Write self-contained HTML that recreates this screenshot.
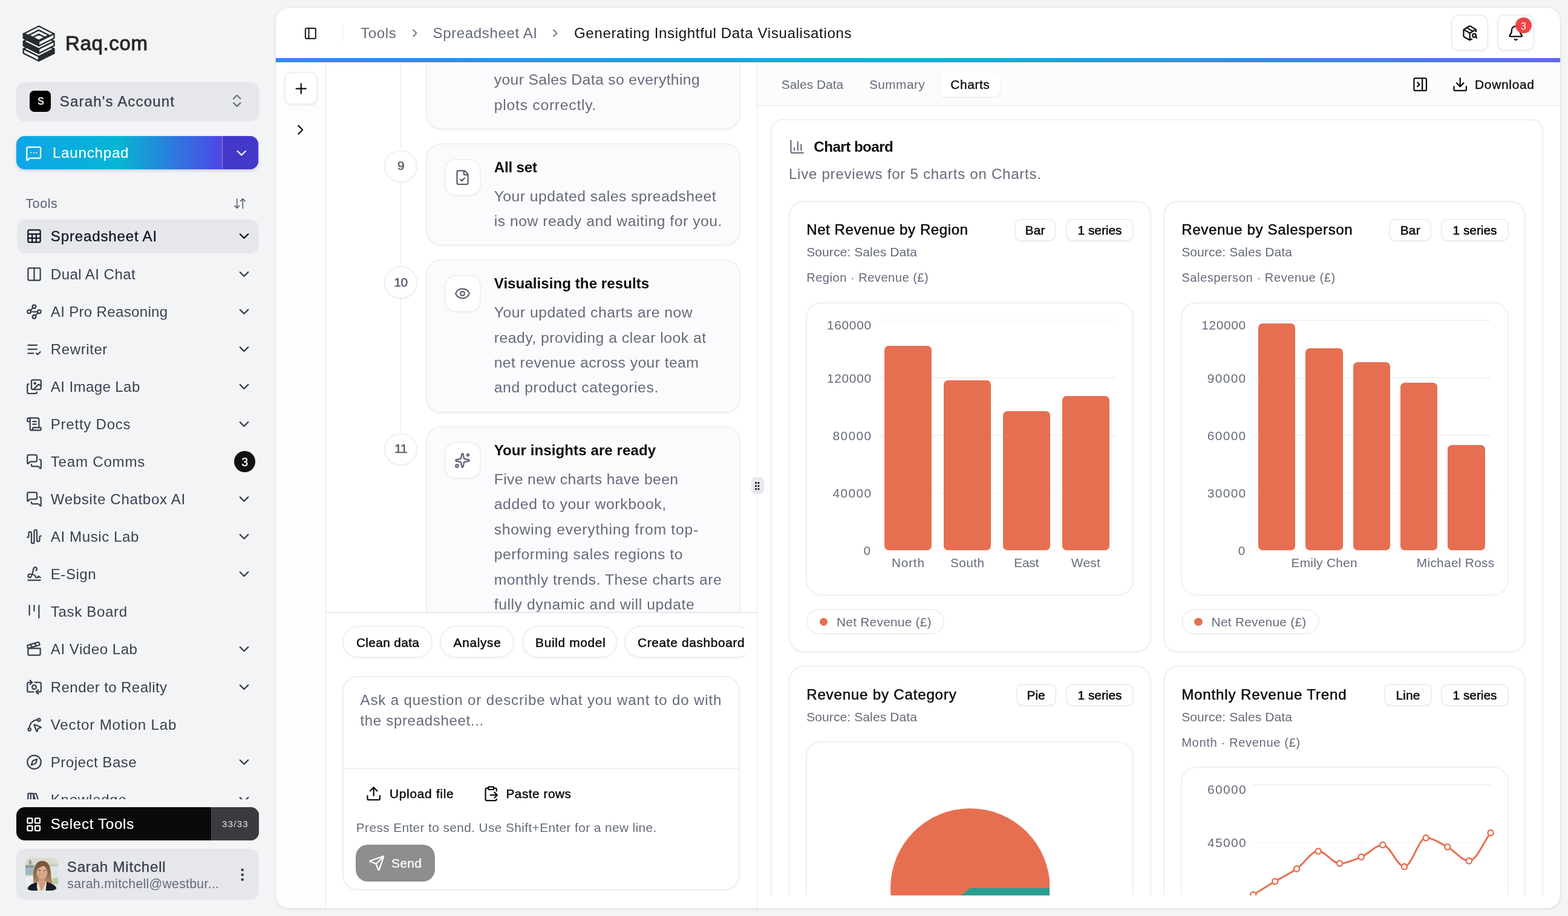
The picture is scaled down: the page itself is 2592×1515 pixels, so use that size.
<!DOCTYPE html>
<html lang="en"><head><meta charset="utf-8"><title>Raq.com – Spreadsheet AI</title>
<style>
*{box-sizing:border-box;margin:0;padding:0}
html,body{width:2592px;height:1515px;overflow:hidden;background:#f3f4f6}
body{position:relative;will-change:transform;font-family:"Liberation Sans",sans-serif;-webkit-font-smoothing:antialiased}
div,svg{position:absolute}
.t{white-space:nowrap}
</style></head><body>
<svg style="left:30px;top:35px" width="70" height="75" viewBox="0 0 70 75"><g transform="scale(0.05091)" stroke="#272c2e" stroke-width="45" stroke-linejoin="round"><polygon points="670,652 1168,901 670,1150 172,901" fill="#f3f4f6"/><polygon points="172,901 670,1150 670,1292 172,1044" fill="#f3f4f6"/><polygon points="1168,901 670,1150 670,1292 1168,1044" fill="#272c2e"/><polygon points="670,407 1168,656 670,905 172,656" fill="#f3f4f6"/><polygon points="172,656 670,905 670,1048 172,798" fill="#272c2e"/><polygon points="1168,656 670,905 670,1048 1168,798" fill="#f3f4f6"/><polygon points="670,162 1168,411 670,660 172,411" fill="#f3f4f6"/><polygon points="172,411 670,660 670,802 172,554" fill="#272c2e"/><polygon points="1168,411 670,660 670,802 1168,554" fill="#f3f4f6"/><polygon points="172,411 340,457 470,525 670,625 670,660" fill="#272c2e"/><polygon points="670,292 1000,457 670,622 340,457" fill="none"/><polygon points="670,425 870,525 670,625 470,525" fill="#f3f4f6"/></g></svg>
<div class="t" style="left:108.00px;top:53.00px;font-size:32.96px;line-height:37px;height:37px;color:#27272a;-webkit-text-stroke:1.0px #27272a;letter-spacing:0.688px;">Raq.com</div>
<div style="left:27.00px;top:136.20px;width:401.00px;height:64.20px;background:#e5e7eb;border-radius:14px;box-shadow:0 1px 2px rgba(20,20,50,.05);"></div>
<div style="left:49.40px;top:149.90px;width:34.60px;height:34.70px;background:#000;border-radius:7.5px;"></div>
<div class="t" style="left:62.30px;top:159.00px;font-size:15.86px;line-height:17px;height:17px;color:#fff;-webkit-text-stroke:0.4px #fff;">S</div>
<div class="t" style="left:98.80px;top:154.00px;font-size:24.10px;line-height:27px;height:27px;color:#3a3f4e;-webkit-text-stroke:0.35px #3a3f4e;letter-spacing:1.130px;">Sarah's Account</div>
<svg style="left:378.30px;top:153.10px;" width="27.40" height="27.40" viewBox="0 0 24 24" fill="none" color="#6b7280" stroke="#6b7280" stroke-width="2" stroke-linecap="round" stroke-linejoin="round"><path d="m7 15 5 5 5-5"/><path d="m7 9 5-5 5 5"/></svg>
<div style="left:27.00px;top:225.00px;width:400.20px;height:55.30px;border-radius:14px;background:linear-gradient(90deg,#0ea5e9 0%,#06b6d4 42%,#4f46e5 85%,#4f46e5 100%);box-shadow:0 2px 5px rgba(30,40,120,.22);"></div>
<div style="left:366.60px;top:225.00px;width:60.60px;height:55.30px;border-radius:0 14px 14px 0;background:#4338ca;border-left:1.5px solid rgba(255,255,255,.45);"></div>
<svg style="left:42.10px;top:239.90px;" width="27.40" height="27.40" viewBox="0 0 24 24" fill="none" color="#fff" stroke="#fff" stroke-width="2" stroke-linecap="round" stroke-linejoin="round"><path d="M22 17a2 2 0 0 1-2 2H6.828a2 2 0 0 0-1.414.586l-2.202 2.202A.71.71 0 0 1 2 21.286V5a2 2 0 0 1 2-2h16a2 2 0 0 1 2 2z"/><path d="M12 11h.01"/><path d="M16 11h.01"/><path d="M8 11h.01"/></svg>
<div class="t" style="left:86.90px;top:239.00px;font-size:24.10px;line-height:27px;height:27px;color:#fff;-webkit-text-stroke:0.15px #fff;letter-spacing:0.794px;">Launchpad</div>
<svg style="left:385.65px;top:240.35px;" width="26.50" height="26.50" viewBox="0 0 24 24" fill="none" color="#fff" stroke="#fff" stroke-width="2" stroke-linecap="round" stroke-linejoin="round"><path d="m6 9 6 6 6-6"/></svg>
<div class="t" style="left:42.60px;top:325.00px;font-size:21.22px;line-height:23px;height:23px;color:#656a7b;-webkit-text-stroke:0.2px #656a7b;letter-spacing:0.613px;">Tools</div>
<svg style="left:385.30px;top:325.10px;" width="23.00" height="23.00" viewBox="0 0 24 24" fill="none" color="#5f6472" stroke="#5f6472" stroke-width="1.8" stroke-linecap="round" stroke-linejoin="round"><path d="m3 16 4 4 4-4"/><path d="M7 20V4"/><path d="m21 8-4-4-4 4"/><path d="M17 4v16"/></svg>
<div style="left:0.00px;top:355.00px;width:456.00px;height:966.70px;overflow:hidden;"><div style="left:27.80px;top:8.25px;width:400.00px;height:55.30px;background:#e5e7eb;border-radius:14px;"></div>
<svg style="left:43.00px;top:22.45px;" width="27.00" height="27.00" viewBox="0 0 24 24" fill="none" color="#111827" stroke="#111827" stroke-width="2" stroke-linecap="round" stroke-linejoin="round"><rect width="18" height="18" x="3" y="3" rx="2" ry="2"/><line x1="3" x2="21" y1="9" y2="9"/><line x1="3" x2="21" y1="15" y2="15"/><line x1="9" x2="9" y1="9" y2="21"/><line x1="15" x2="15" y1="9" y2="21"/></svg>
<div class="t" style="left:83.80px;top:22.00px;font-size:24.10px;line-height:27px;height:27px;color:#111827;-webkit-text-stroke:0.35px #111827;letter-spacing:0.818px;">Spreadsheet AI</div>
<svg style="left:390.00px;top:22.45px;" width="27.00" height="27.00" viewBox="0 0 24 24" fill="none" color="#111827" stroke="#111827" stroke-width="2" stroke-linecap="round" stroke-linejoin="round"><path d="m6 9 6 6 6-6"/></svg>
<svg style="left:43.00px;top:84.54px;" width="27.00" height="27.00" viewBox="0 0 24 24" fill="none" color="#3a3f4e" stroke="#3a3f4e" stroke-width="2" stroke-linecap="round" stroke-linejoin="round"><rect width="18" height="18" x="3" y="3" rx="2"/><path d="M12 3v18"/></svg>
<div class="t" style="left:83.80px;top:85.00px;font-size:24.10px;line-height:27px;height:27px;color:#3a3f4e;letter-spacing:0.429px;">Dual AI Chat</div>
<svg style="left:390.00px;top:84.54px;" width="27.00" height="27.00" viewBox="0 0 24 24" fill="none" color="#3a3f4e" stroke="#3a3f4e" stroke-width="2" stroke-linecap="round" stroke-linejoin="round"><path d="m6 9 6 6 6-6"/></svg>
<svg style="left:43.00px;top:146.63px;" width="27.00" height="27.00" viewBox="0 0 24 24" fill="none" color="#3a3f4e" stroke="#3a3f4e" stroke-width="2" stroke-linecap="round" stroke-linejoin="round"><circle cx="12" cy="4.5" r="2.5"/><path d="m10.2 6.3-3.9 3.9"/><circle cx="4.5" cy="12" r="2.5"/><path d="M7 12h10"/><circle cx="19.5" cy="12" r="2.5"/><path d="m13.8 17.7 3.9-3.9"/><circle cx="12" cy="19.5" r="2.5"/></svg>
<div class="t" style="left:83.80px;top:147.00px;font-size:24.10px;line-height:27px;height:27px;color:#3a3f4e;letter-spacing:0.303px;">AI Pro Reasoning</div>
<svg style="left:390.00px;top:146.63px;" width="27.00" height="27.00" viewBox="0 0 24 24" fill="none" color="#3a3f4e" stroke="#3a3f4e" stroke-width="2" stroke-linecap="round" stroke-linejoin="round"><path d="m6 9 6 6 6-6"/></svg>
<svg style="left:43.00px;top:208.72px;" width="27.00" height="27.00" viewBox="0 0 24 24" fill="none" color="#3a3f4e" stroke="#3a3f4e" stroke-width="2" stroke-linecap="round" stroke-linejoin="round"><path d="M11 18H3"/><path d="m15 18 2 2 4-4"/><path d="M16 12H3"/><path d="M16 6H3"/></svg>
<div class="t" style="left:83.80px;top:209.00px;font-size:24.10px;line-height:27px;height:27px;color:#3a3f4e;letter-spacing:0.557px;">Rewriter</div>
<svg style="left:390.00px;top:208.72px;" width="27.00" height="27.00" viewBox="0 0 24 24" fill="none" color="#3a3f4e" stroke="#3a3f4e" stroke-width="2" stroke-linecap="round" stroke-linejoin="round"><path d="m6 9 6 6 6-6"/></svg>
<svg style="left:43.00px;top:270.81px;" width="27.00" height="27.00" viewBox="0 0 24 24" fill="none" color="#3a3f4e" stroke="#3a3f4e" stroke-width="2" stroke-linecap="round" stroke-linejoin="round"><path d="m22 11-1.296-1.296a2.4 2.4 0 0 0-3.408 0L11 16"/><path d="M4 8a2 2 0 0 0-2 2v10a2 2 0 0 0 2 2h10a2 2 0 0 0 2-2"/><circle cx="13" cy="7" r="1" fill="currentColor"/><rect x="8" y="2" width="14" height="14" rx="2"/></svg>
<div class="t" style="left:83.80px;top:271.00px;font-size:24.10px;line-height:27px;height:27px;color:#3a3f4e;letter-spacing:0.379px;">AI Image Lab</div>
<svg style="left:390.00px;top:270.81px;" width="27.00" height="27.00" viewBox="0 0 24 24" fill="none" color="#3a3f4e" stroke="#3a3f4e" stroke-width="2" stroke-linecap="round" stroke-linejoin="round"><path d="m6 9 6 6 6-6"/></svg>
<svg style="left:43.00px;top:332.90px;" width="27.00" height="27.00" viewBox="0 0 24 24" fill="none" color="#3a3f4e" stroke="#3a3f4e" stroke-width="2" stroke-linecap="round" stroke-linejoin="round"><path d="M15 12h-5"/><path d="M15 8h-5"/><path d="M19 17V5a2 2 0 0 0-2-2H4"/><path d="M8 21h12a2 2 0 0 0 2-2v-1a1 1 0 0 0-1-1H11a1 1 0 0 0-1 1v1a2 2 0 1 1-4 0V5a2 2 0 1 0-4 0v2a1 1 0 0 0 1 1h3"/></svg>
<div class="t" style="left:83.80px;top:333.00px;font-size:24.10px;line-height:27px;height:27px;color:#3a3f4e;letter-spacing:0.727px;">Pretty Docs</div>
<svg style="left:390.00px;top:332.90px;" width="27.00" height="27.00" viewBox="0 0 24 24" fill="none" color="#3a3f4e" stroke="#3a3f4e" stroke-width="2" stroke-linecap="round" stroke-linejoin="round"><path d="m6 9 6 6 6-6"/></svg>
<svg style="left:43.00px;top:394.99px;" width="27.00" height="27.00" viewBox="0 0 24 24" fill="none" color="#3a3f4e" stroke="#3a3f4e" stroke-width="2" stroke-linecap="round" stroke-linejoin="round"><path d="M16 10a2 2 0 0 1-2 2H6.828a2 2 0 0 0-1.414.586l-2.202 2.202A.71.71 0 0 1 2 14.286V4a2 2 0 0 1 2-2h10a2 2 0 0 1 2 2z"/><path d="M20 9a2 2 0 0 1 2 2v10.286a.71.71 0 0 1-1.212.502l-2.202-2.202A2 2 0 0 0 17.172 19H10a2 2 0 0 1-2-2v-1"/></svg>
<div class="t" style="left:83.80px;top:395.00px;font-size:24.10px;line-height:27px;height:27px;color:#3a3f4e;letter-spacing:0.766px;">Team Comms</div>
<div style="left:387.40px;top:391.09px;width:34.80px;height:34.80px;background:#111113;border-radius:50%;"></div>
<div class="t" style="left:399.30px;top:398.00px;font-size:19.57px;line-height:22px;height:22px;color:#fff;-webkit-text-stroke:0.25px #fff;">3</div>
<svg style="left:43.00px;top:457.08px;" width="27.00" height="27.00" viewBox="0 0 24 24" fill="none" color="#3a3f4e" stroke="#3a3f4e" stroke-width="2" stroke-linecap="round" stroke-linejoin="round"><path d="M16 10a2 2 0 0 1-2 2H6.828a2 2 0 0 0-1.414.586l-2.202 2.202A.71.71 0 0 1 2 14.286V4a2 2 0 0 1 2-2h10a2 2 0 0 1 2 2z"/><path d="M20 9a2 2 0 0 1 2 2v10.286a.71.71 0 0 1-1.212.502l-2.202-2.202A2 2 0 0 0 17.172 19H10a2 2 0 0 1-2-2v-1"/></svg>
<div class="t" style="left:83.80px;top:457.00px;font-size:24.10px;line-height:27px;height:27px;color:#3a3f4e;letter-spacing:0.655px;">Website Chatbox AI</div>
<svg style="left:390.00px;top:457.08px;" width="27.00" height="27.00" viewBox="0 0 24 24" fill="none" color="#3a3f4e" stroke="#3a3f4e" stroke-width="2" stroke-linecap="round" stroke-linejoin="round"><path d="m6 9 6 6 6-6"/></svg>
<svg style="left:43.00px;top:519.17px;" width="27.00" height="27.00" viewBox="0 0 24 24" fill="none" color="#3a3f4e" stroke="#3a3f4e" stroke-width="2" stroke-linecap="round" stroke-linejoin="round"><path d="M2 13a2 2 0 0 0 2-2V7a2 2 0 0 1 4 0v13a2 2 0 0 0 4 0V4a2 2 0 0 1 4 0v13a2 2 0 0 0 4 0v-4a2 2 0 0 1 2-2"/></svg>
<div class="t" style="left:83.80px;top:519.00px;font-size:24.10px;line-height:27px;height:27px;color:#3a3f4e;letter-spacing:0.584px;">AI Music Lab</div>
<svg style="left:390.00px;top:519.17px;" width="27.00" height="27.00" viewBox="0 0 24 24" fill="none" color="#3a3f4e" stroke="#3a3f4e" stroke-width="2" stroke-linecap="round" stroke-linejoin="round"><path d="m6 9 6 6 6-6"/></svg>
<svg style="left:43.00px;top:581.26px;" width="27.00" height="27.00" viewBox="0 0 24 24" fill="none" color="#3a3f4e" stroke="#3a3f4e" stroke-width="2" stroke-linecap="round" stroke-linejoin="round"><path d="m21 17-2.156-1.868A.5.5 0 0 0 18 15.5v.5a1 1 0 0 1-1 1h-2a1 1 0 0 1-1-1c0-2.545-3.991-3.97-8.5-4a1 1 0 0 0 0 5c4.153 0 4.745-11.295 5.708-13.5a2.5 2.5 0 1 1 3.31 3.284"/><path d="M3 21h18"/></svg>
<div class="t" style="left:83.80px;top:581.00px;font-size:24.10px;line-height:27px;height:27px;color:#3a3f4e;letter-spacing:0.494px;">E-Sign</div>
<svg style="left:390.00px;top:581.26px;" width="27.00" height="27.00" viewBox="0 0 24 24" fill="none" color="#3a3f4e" stroke="#3a3f4e" stroke-width="2" stroke-linecap="round" stroke-linejoin="round"><path d="m6 9 6 6 6-6"/></svg>
<svg style="left:43.00px;top:643.35px;" width="27.00" height="27.00" viewBox="0 0 24 24" fill="none" color="#3a3f4e" stroke="#3a3f4e" stroke-width="2" stroke-linecap="round" stroke-linejoin="round"><path d="M5 3v14"/><path d="M12 3v8"/><path d="M19 3v18"/></svg>
<div class="t" style="left:83.80px;top:643.00px;font-size:24.10px;line-height:27px;height:27px;color:#3a3f4e;letter-spacing:0.652px;">Task Board</div>
<svg style="left:43.00px;top:705.44px;" width="27.00" height="27.00" viewBox="0 0 24 24" fill="none" color="#3a3f4e" stroke="#3a3f4e" stroke-width="2" stroke-linecap="round" stroke-linejoin="round"><path d="M20.2 6 3 11l-.9-2.4c-.3-1.1.3-2.2 1.3-2.5l13.5-4c1.1-.3 2.2.3 2.5 1.3Z"/><path d="m6.2 5.3 3.1 3.9"/><path d="m12.4 3.4 3.1 4"/><path d="M3 11h18v8a2 2 0 0 1-2 2H5a2 2 0 0 1-2-2Z"/></svg>
<div class="t" style="left:83.80px;top:705.00px;font-size:24.10px;line-height:27px;height:27px;color:#3a3f4e;letter-spacing:0.514px;">AI Video Lab</div>
<svg style="left:390.00px;top:705.44px;" width="27.00" height="27.00" viewBox="0 0 24 24" fill="none" color="#3a3f4e" stroke="#3a3f4e" stroke-width="2" stroke-linecap="round" stroke-linejoin="round"><path d="m6 9 6 6 6-6"/></svg>
<svg style="left:43.00px;top:767.53px;" width="27.00" height="27.00" viewBox="0 0 24 24" fill="none" color="#3a3f4e" stroke="#3a3f4e" stroke-width="2" stroke-linecap="round" stroke-linejoin="round"><path d="M11 19H4a2 2 0 0 1-2-2V7a2 2 0 0 1 2-2h5"/><path d="M13 5h7a2 2 0 0 1 2 2v10a2 2 0 0 1-2 2h-5"/><circle cx="12" cy="12" r="3"/><path d="m18 22-3-3 3-3"/><path d="m6 2 3 3-3 3"/></svg>
<div class="t" style="left:83.80px;top:768.00px;font-size:24.10px;line-height:27px;height:27px;color:#3a3f4e;letter-spacing:0.378px;">Render to Reality</div>
<svg style="left:390.00px;top:767.53px;" width="27.00" height="27.00" viewBox="0 0 24 24" fill="none" color="#3a3f4e" stroke="#3a3f4e" stroke-width="2" stroke-linecap="round" stroke-linejoin="round"><path d="m6 9 6 6 6-6"/></svg>
<svg style="left:43.00px;top:829.62px;" width="27.00" height="27.00" viewBox="0 0 24 24" fill="none" color="#3a3f4e" stroke="#3a3f4e" stroke-width="2" stroke-linecap="round" stroke-linejoin="round"><path d="M12.034 12.681a.498.498 0 0 1 .647-.647l9 3.5a.5.5 0 0 1-.033.943l-3.444 1.068a1 1 0 0 0-.66.66l-1.067 3.443a.5.5 0 0 1-.943.033z"/><path d="M5 17A12 12 0 0 1 17 5"/><circle cx="19" cy="5" r="2"/><circle cx="5" cy="19" r="2"/></svg>
<div class="t" style="left:83.80px;top:830.00px;font-size:24.10px;line-height:27px;height:27px;color:#3a3f4e;letter-spacing:0.836px;">Vector Motion Lab</div>
<svg style="left:43.00px;top:891.71px;" width="27.00" height="27.00" viewBox="0 0 24 24" fill="none" color="#3a3f4e" stroke="#3a3f4e" stroke-width="2" stroke-linecap="round" stroke-linejoin="round"><path d="m16.24 7.76-1.804 5.411a2 2 0 0 1-1.265 1.265L7.76 16.24l1.804-5.411a2 2 0 0 1 1.265-1.265z"/><circle cx="12" cy="12" r="10"/></svg>
<div class="t" style="left:83.80px;top:892.00px;font-size:24.10px;line-height:27px;height:27px;color:#3a3f4e;letter-spacing:0.481px;">Project Base</div>
<svg style="left:390.00px;top:891.71px;" width="27.00" height="27.00" viewBox="0 0 24 24" fill="none" color="#3a3f4e" stroke="#3a3f4e" stroke-width="2" stroke-linecap="round" stroke-linejoin="round"><path d="m6 9 6 6 6-6"/></svg>
<svg style="left:43.00px;top:953.80px;" width="27.00" height="27.00" viewBox="0 0 24 24" fill="none" color="#3a3f4e" stroke="#3a3f4e" stroke-width="2" stroke-linecap="round" stroke-linejoin="round"><rect width="8" height="18" x="3" y="3" rx="1"/><path d="M7 3v18"/><path d="M20.4 18.9c.2.5-.1 1.1-.6 1.3l-1.9.7c-.5.2-1.1-.1-1.3-.6L11.1 5.1c-.2-.5.1-1.1.6-1.3l1.9-.7c.5-.2 1.1.1 1.3.6Z"/></svg>
<div class="t" style="left:83.80px;top:954.00px;font-size:24.10px;line-height:27px;height:27px;color:#3a3f4e;letter-spacing:0.721px;">Knowledge</div>
<svg style="left:390.00px;top:953.80px;" width="27.00" height="27.00" viewBox="0 0 24 24" fill="none" color="#3a3f4e" stroke="#3a3f4e" stroke-width="2" stroke-linecap="round" stroke-linejoin="round"><path d="m6 9 6 6 6-6"/></svg></div>
<div style="left:27.00px;top:1335.00px;width:400.80px;height:55.30px;background:#09090b;border-radius:14px;"></div>
<div style="left:349.20px;top:1335.00px;width:78.60px;height:55.30px;background:#3a3a3f;border-radius:0 14px 14px 0;border-left:1px solid #4a4a50;"></div>
<svg style="left:42.00px;top:1350.20px;" width="27.40" height="27.40" viewBox="0 0 24 24" fill="none" color="#fff" stroke="#fff" stroke-width="2" stroke-linecap="round" stroke-linejoin="round"><rect width="7" height="7" x="3" y="3" rx="1"/><rect width="7" height="7" x="14" y="3" rx="1"/><rect width="7" height="7" x="14" y="14" rx="1"/><rect width="7" height="7" x="3" y="14" rx="1"/></svg>
<div class="t" style="left:83.80px;top:1349.00px;font-size:24.10px;line-height:27px;height:27px;color:#fff;-webkit-text-stroke:0.2px #fff;letter-spacing:0.721px;">Select Tools</div>
<div class="t" style="left:367.00px;top:1354.00px;font-size:15.04px;line-height:17px;height:17px;color:#e4e4e7;letter-spacing:1.269px;">33/33</div>
<div style="left:27.00px;top:1404.20px;width:400.80px;height:83.60px;background:#e5e7eb;border-radius:14px;"></div>
<svg style="left:42px;top:1418.8px;border-radius:10.5px" width="54.2" height="54.2" viewBox="0 0 54 54">
<defs><filter id="avb" x="-20%" y="-20%" width="140%" height="140%"><feGaussianBlur stdDeviation="1.1"/></filter>
<filter id="avc" x="-20%" y="-20%" width="140%" height="140%"><feGaussianBlur stdDeviation="0.6"/></filter>
<linearGradient id="avh" x1="0" y1="0" x2="0" y2="1"><stop offset="0" stop-color="#6f5238"/><stop offset=".55" stop-color="#8a6848"/><stop offset="1" stop-color="#b08d66"/></linearGradient>
<linearGradient id="avs" x1="0" y1="0" x2="0" y2="1"><stop offset="0" stop-color="#e3b697"/><stop offset="1" stop-color="#d09a7b"/></linearGradient></defs>
<rect width="54" height="54" fill="#dfe3e1"/>
<g filter="url(#avb)">
<rect x="-2" y="-2" width="58" height="15" fill="#dbd9cd"/>
<rect x="-2" y="12" width="17" height="17" fill="#a3b6c0"/>
<rect x="-2" y="12" width="17" height="3" fill="#6f7f86"/>
<rect x="-2" y="29" width="15" height="17" fill="#eceef1"/>
<rect x="38" y="11" width="18" height="30" fill="#dfe5e2"/>
<rect x="38" y="11" width="18" height="2.500" fill="#b9c2bf"/>
<rect x="45" y="33" width="11" height="10" fill="#b5cd9b"/>
<path d="M6.500 3.500l2 .5 1.500 6-3 .500z" fill="#4a463f"/>
</g>
<g filter="url(#avc)">
<path d="M13.500 41C12 30 13 17 17.500 10.500 20.500 6 24.500 5 28 5c4.500 0 8.500 2 11 7 3 6 3 14 3.500 20 .3 4 1.500 7 3 9.500H13.500Z" fill="url(#avh)"/>
<path d="M22 32h10v14H22z" fill="#cf9a7b"/>
<ellipse cx="27.300" cy="24.500" rx="9" ry="11.800" fill="url(#avs)"/>
<path d="M17.500 22C17 13 21.500 9.500 27 9.500c6 0 10.500 4 10 13-1.500-5-4-8.500-7-9.500-4 1.500-9 3.500-12.500 9Z" fill="#7b5b3e"/>
<path d="M22.500 29.500q4.800 3.400 9.600 0-4.800 4.600-9.600 0Z" fill="#f6ece6"/>
<path d="M21.500 20.600h3.600M29.800 20.600h3.600" stroke="#5b4030" stroke-width="1.200"/>
<path d="M3 54C3.500 46 8 43 18 40.500L27 46 35.500 39.500C45 42 51 45.500 52.500 54Z" fill="#191d2c"/>
<path d="M19.500 40 22 38.500h10.500L35 40l-1.500 14H18Z" fill="#e9dfcd"/>
<path d="M22 38h10.500l.5 3-5 13h-2.500L21.500 41Z" fill="#d19c7d"/>
<path d="M17.500 41 20 54H3.500C4 47 9 43.500 17.500 41Z" fill="#191d2c"/>
<path d="M35.500 40 33.500 54H52C51 46.500 45 42.500 35.500 40Z" fill="#191d2c"/>
</g></svg>
<div class="t" style="left:110.80px;top:1420.00px;font-size:24.10px;line-height:27px;height:27px;color:#3a3f4e;-webkit-text-stroke:0.35px #3a3f4e;letter-spacing:0.787px;">Sarah Mitchell</div>
<div class="t" style="left:111.30px;top:1450.00px;font-size:21.22px;line-height:23px;height:23px;color:#656a7b;letter-spacing:0.310px;">sarah.mitchell@westbur...</div>
<svg style="left:387.10px;top:1432.60px;" width="27.40" height="27.40" viewBox="0 0 24 24" fill="none" color="#3a3f4e" stroke="#3a3f4e" stroke-width="2" stroke-linecap="round" stroke-linejoin="round"><circle cx="12" cy="12" r="1"/><circle cx="12" cy="5" r="1"/><circle cx="12" cy="19" r="1"/></svg>
<div style="left:456.00px;top:13.00px;width:2123.00px;height:1488.50px;background:#fff;border-radius:21px;box-shadow:0 1px 4px rgba(15,20,40,.13),0 0 1px rgba(15,20,40,.10);"></div>
<div style="left:456.00px;top:13.00px;width:2123.00px;height:1488.50px;border-radius:21px;overflow:hidden;"><div style="left:0.00px;top:90.40px;width:82.60px;height:1400.00px;background:#fdfdfe;border-right:1.6px solid #e6e7ee;"></div>
<div style="left:14.00px;top:106.30px;width:54.60px;height:54.20px;background:#fff;border:2px solid #eff0f5;border-radius:12px;box-shadow:0 1px 3px rgba(20,20,50,.10);"></div>
<svg style="left:27.60px;top:119.70px;" width="27.40" height="27.40" viewBox="0 0 24 24" fill="none" color="#111" stroke="#111" stroke-width="2" stroke-linecap="round" stroke-linejoin="round"><path d="M5 12h14"/><path d="M12 5v14"/></svg>
<svg style="left:27.10px;top:188.10px;" width="27.40" height="27.40" viewBox="0 0 24 24" fill="none" color="#111" stroke="#111" stroke-width="2" stroke-linecap="round" stroke-linejoin="round"><path d="m9 18 6-6-6-6"/></svg>
<div style="left:83.00px;top:90.40px;width:712.50px;height:910.00px;overflow:hidden;background:#fff;"><div style="left:122.80px;top:-3.40px;width:1.50px;height:144.00px;background:#e6e7ee;"></div>
<div style="left:122.80px;top:198.10px;width:1.50px;height:135.00px;background:#e6e7ee;"></div>
<div style="left:122.80px;top:391.10px;width:1.50px;height:217.20px;background:#e6e7ee;"></div>
<div style="left:165.20px;top:-43.40px;width:519.80px;height:154.00px;background:#fbfbfd;border:2px solid #eff0f5;border-radius:25px;box-shadow:0 1px 3px rgba(20,20,50,.06);"></div>
<div class="t" style="left:277.70px;top:14.60px;font-size:24.72px;line-height:27px;height:27px;color:#656a7b;letter-spacing:0.366px;">your Sales Data so everything</div>
<div class="t" style="left:277.70px;top:56.60px;font-size:24.72px;line-height:27px;height:27px;color:#656a7b;letter-spacing:0.752px;">plots correctly.</div>
<div style="left:165.20px;top:133.80px;width:519.80px;height:169.10px;background:#fbfbfd;border:2px solid #eff0f5;border-radius:25px;box-shadow:0 1px 3px rgba(20,20,50,.06);"></div>
<div style="left:96.40px;top:144.20px;width:54.40px;height:54.00px;background:#fff;border:2px solid #eff0f5;border-radius:50%;box-shadow:0 1px 2px rgba(20,20,50,.05);"></div>
<div class="t" style="left:118.10px;top:158.60px;font-size:20.81px;line-height:23px;height:23px;color:#5b6070;-webkit-text-stroke:0.6px #5b6070;">9</div>
<div style="left:195.70px;top:159.60px;width:60.00px;height:61.00px;background:#fff;border:2px solid #eff0f5;border-radius:18px;box-shadow:0 1px 2px rgba(20,20,50,.05);"></div>
<svg style="left:212.10px;top:176.30px;" width="27.00" height="27.00" viewBox="0 0 24 24" fill="none" color="#5b6070" stroke="#5b6070" stroke-width="2" stroke-linecap="round" stroke-linejoin="round"><path d="M6 22a2 2 0 0 1-2-2V4a2 2 0 0 1 2-2h8a2.4 2.4 0 0 1 1.704.706l3.588 3.588A2.4 2.4 0 0 1 20 8v12a2 2 0 0 1-2 2z"/><path d="M14 2v5a1 1 0 0 0 1 1h5"/><path d="m9 15 2 2 4-4"/></svg>
<div class="t" style="left:277.70px;top:159.60px;font-size:24.10px;line-height:27px;height:27px;color:#0b0b0f;font-weight:700;letter-spacing:-0.152px;">All set</div>
<div class="t" style="left:277.70px;top:207.60px;font-size:24.72px;line-height:27px;height:27px;color:#656a7b;letter-spacing:0.460px;">Your updated sales spreadsheet</div>
<div class="t" style="left:277.70px;top:248.60px;font-size:24.72px;line-height:27px;height:27px;color:#656a7b;letter-spacing:0.525px;">is now ready and waiting for you.</div>
<div style="left:165.20px;top:326.10px;width:519.80px;height:253.70px;background:#fbfbfd;border:2px solid #eff0f5;border-radius:25px;box-shadow:0 1px 3px rgba(20,20,50,.06);"></div>
<div style="left:96.40px;top:336.50px;width:54.40px;height:54.00px;background:#fff;border:2px solid #eff0f5;border-radius:50%;box-shadow:0 1px 2px rgba(20,20,50,.05);"></div>
<div class="t" style="left:112.60px;top:351.60px;font-size:20.81px;line-height:23px;height:23px;color:#5b6070;-webkit-text-stroke:0.6px #5b6070;letter-spacing:-0.541px;">10</div>
<div style="left:195.70px;top:351.90px;width:60.00px;height:61.00px;background:#fff;border:2px solid #eff0f5;border-radius:18px;box-shadow:0 1px 2px rgba(20,20,50,.05);"></div>
<svg style="left:212.10px;top:368.60px;" width="27.00" height="27.00" viewBox="0 0 24 24" fill="none" color="#5b6070" stroke="#5b6070" stroke-width="2" stroke-linecap="round" stroke-linejoin="round"><path d="M2.062 12.348a1 1 0 0 1 0-.696 10.75 10.75 0 0 1 19.876 0 1 1 0 0 1 0 .696 10.75 10.75 0 0 1-19.876 0"/><circle cx="12" cy="12" r="3"/></svg>
<div class="t" style="left:277.70px;top:351.60px;font-size:24.10px;line-height:27px;height:27px;color:#0b0b0f;font-weight:700;letter-spacing:0.054px;">Visualising the results</div>
<div class="t" style="left:277.70px;top:399.60px;font-size:24.72px;line-height:27px;height:27px;color:#656a7b;letter-spacing:0.490px;">Your updated charts are now</div>
<div class="t" style="left:277.70px;top:441.60px;font-size:24.72px;line-height:27px;height:27px;color:#656a7b;letter-spacing:0.503px;">ready, providing a clear look at</div>
<div class="t" style="left:277.70px;top:482.60px;font-size:24.72px;line-height:27px;height:27px;color:#656a7b;letter-spacing:0.414px;">net revenue across your team</div>
<div class="t" style="left:277.70px;top:523.60px;font-size:24.72px;line-height:27px;height:27px;color:#656a7b;letter-spacing:0.603px;">and product categories.</div>
<div style="left:165.20px;top:601.90px;width:519.80px;height:394.70px;background:#fbfbfd;border:2px solid #eff0f5;border-radius:25px;box-shadow:0 1px 3px rgba(20,20,50,.06);"></div>
<div style="left:96.40px;top:612.30px;width:54.40px;height:54.00px;background:#fff;border:2px solid #eff0f5;border-radius:50%;box-shadow:0 1px 2px rgba(20,20,50,.05);"></div>
<div class="t" style="left:113.30px;top:626.60px;font-size:20.81px;line-height:23px;height:23px;color:#5b6070;-webkit-text-stroke:0.6px #5b6070;letter-spacing:-0.394px;">11</div>
<div style="left:195.70px;top:627.70px;width:60.00px;height:61.00px;background:#fff;border:2px solid #eff0f5;border-radius:18px;box-shadow:0 1px 2px rgba(20,20,50,.05);"></div>
<svg style="left:212.10px;top:644.40px;" width="27.00" height="27.00" viewBox="0 0 24 24" fill="none" color="#5b6070" stroke="#5b6070" stroke-width="2" stroke-linecap="round" stroke-linejoin="round"><path d="M11.017 2.814a1 1 0 0 1 1.966 0l1.051 5.558a2 2 0 0 0 1.594 1.594l5.558 1.051a1 1 0 0 1 0 1.966l-5.558 1.051a2 2 0 0 0-1.594 1.594l-1.051 5.558a1 1 0 0 1-1.966 0l-1.051-5.558a2 2 0 0 0-1.594-1.594l-5.558-1.051a1 1 0 0 1 0-1.966l5.558-1.051a2 2 0 0 0 1.594-1.594z"/><path d="M20 2v4"/><path d="M22 4h-4"/><circle cx="4" cy="20" r="2"/></svg>
<div class="t" style="left:277.70px;top:627.60px;font-size:24.10px;line-height:27px;height:27px;color:#0b0b0f;font-weight:700;letter-spacing:0.063px;">Your insights are ready</div>
<div class="t" style="left:277.70px;top:675.60px;font-size:24.72px;line-height:27px;height:27px;color:#656a7b;letter-spacing:0.374px;">Five new charts have been</div>
<div class="t" style="left:277.70px;top:716.60px;font-size:24.72px;line-height:27px;height:27px;color:#656a7b;letter-spacing:0.627px;">added to your workbook,</div>
<div class="t" style="left:277.70px;top:758.60px;font-size:24.72px;line-height:27px;height:27px;color:#656a7b;letter-spacing:0.745px;">showing everything from top-</div>
<div class="t" style="left:277.70px;top:799.60px;font-size:24.72px;line-height:27px;height:27px;color:#656a7b;letter-spacing:0.525px;">performing sales regions to</div>
<div class="t" style="left:277.70px;top:841.60px;font-size:24.72px;line-height:27px;height:27px;color:#656a7b;letter-spacing:0.487px;">monthly trends. These charts are</div>
<div class="t" style="left:277.70px;top:882.60px;font-size:24.72px;line-height:27px;height:27px;color:#656a7b;letter-spacing:0.584px;">fully dynamic and will update</div></div>
<div style="left:83.00px;top:999.20px;width:712.50px;height:1.80px;background:#e6e7ee;"></div>
<div style="left:104.00px;top:1012.00px;width:672.00px;height:75.00px;overflow:hidden;"><div style="left:6.30px;top:10.30px;width:148.70px;height:53.00px;background:#fff;border:2px solid #eff0f5;border-radius:26.5px;box-shadow:0 1px 3px rgba(20,20,50,.07);"></div>
<div class="t" style="left:28.90px;top:26.00px;font-size:20.81px;line-height:23px;height:23px;color:#0b0b0f;-webkit-text-stroke:0.5px #0b0b0f;letter-spacing:0.378px;">Clean data</div>
<div style="left:167.00px;top:10.30px;width:123.00px;height:53.00px;background:#fff;border:2px solid #eff0f5;border-radius:26.5px;box-shadow:0 1px 3px rgba(20,20,50,.07);"></div>
<div class="t" style="left:189.60px;top:26.00px;font-size:20.81px;line-height:23px;height:23px;color:#0b0b0f;-webkit-text-stroke:0.5px #0b0b0f;letter-spacing:0.700px;">Analyse</div>
<div style="left:302.50px;top:10.30px;width:157.50px;height:53.00px;background:#fff;border:2px solid #eff0f5;border-radius:26.5px;box-shadow:0 1px 3px rgba(20,20,50,.07);"></div>
<div class="t" style="left:325.10px;top:26.00px;font-size:20.81px;line-height:23px;height:23px;color:#0b0b0f;-webkit-text-stroke:0.5px #0b0b0f;letter-spacing:0.683px;">Build model</div>
<div style="left:471.50px;top:10.30px;width:213.50px;height:53.00px;background:#fff;border:2px solid #eff0f5;border-radius:26.5px;box-shadow:0 1px 3px rgba(20,20,50,.07);"></div>
<div class="t" style="left:494.10px;top:26.00px;font-size:20.81px;line-height:23px;height:23px;color:#0b0b0f;-webkit-text-stroke:0.5px #0b0b0f;letter-spacing:0.667px;">Create dashboard</div></div>
<div style="left:110.30px;top:1105.00px;width:657.20px;height:354.00px;background:#fff;border:2px solid #eff0f5;border-radius:25px;box-shadow:0 1px 3px rgba(20,20,50,.06);"></div>
<div style="left:111.50px;top:1257.20px;width:655.00px;height:1.60px;background:#eceef3;"></div>
<div class="t" style="left:139.50px;top:1131.00px;font-size:24.10px;line-height:27px;height:27px;color:#656a7b;letter-spacing:0.851px;">Ask a question or describe what you want to do with</div>
<div class="t" style="left:139.50px;top:1165.00px;font-size:24.10px;line-height:27px;height:27px;color:#656a7b;letter-spacing:0.636px;">the spreadsheet...</div>
<svg style="left:148.30px;top:1285.60px;" width="27.40" height="27.40" viewBox="0 0 24 24" fill="none" color="#111" stroke="#111" stroke-width="2" stroke-linecap="round" stroke-linejoin="round"><path d="M12 3v12"/><path d="m17 8-5-5-5 5"/><path d="M21 15v4a2 2 0 0 1-2 2H5a2 2 0 0 1-2-2v-4"/></svg>
<div class="t" style="left:188.00px;top:1288.00px;font-size:20.81px;line-height:23px;height:23px;color:#0b0b0f;-webkit-text-stroke:0.5px #0b0b0f;letter-spacing:0.742px;">Upload file</div>
<svg style="left:342.30px;top:1285.60px;" width="27.40" height="27.40" viewBox="0 0 24 24" fill="none" color="#111" stroke="#111" stroke-width="2" stroke-linecap="round" stroke-linejoin="round"><path d="M15 2H9a1 1 0 0 0-1 1v2c0 .6.4 1 1 1h6c.6 0 1-.4 1-1V3c0-.6-.4-1-1-1Z"/><path d="M8 4H6a2 2 0 0 0-2 2v14a2 2 0 0 0 2 2h12a2 2 0 0 0 2-2M16 4h2a2 2 0 0 1 2 2v2M11 14h10"/><path d="m17 10 4 4-4 4"/></svg>
<div class="t" style="left:380.40px;top:1288.00px;font-size:20.81px;line-height:23px;height:23px;color:#0b0b0f;-webkit-text-stroke:0.5px #0b0b0f;letter-spacing:0.525px;">Paste rows</div>
<div class="t" style="left:132.80px;top:1344.00px;font-size:20.81px;line-height:23px;height:23px;color:#656a7b;letter-spacing:0.408px;">Press Enter to send. Use Shift+Enter for a new line.</div>
<div style="left:132.00px;top:1383.90px;width:130.50px;height:61.20px;background:#8e8e91;border-radius:20px;"></div>
<svg style="left:152.60px;top:1400.80px;" width="27.40" height="27.40" viewBox="0 0 24 24" fill="none" color="#fff" stroke="#fff" stroke-width="2" stroke-linecap="round" stroke-linejoin="round"><path d="M14.536 21.686a.5.5 0 0 0 .937-.024l6.5-19a.496.496 0 0 0-.635-.635l-19 6.5a.5.5 0 0 0-.024.937l7.93 3.18a2 2 0 0 1 1.112 1.11z"/><path d="m21.854 2.147-10.94 10.939"/></svg>
<div class="t" style="left:191.00px;top:1403.00px;font-size:21.01px;line-height:23px;height:23px;color:#fff;-webkit-text-stroke:0.3px #fff;letter-spacing:0.318px;">Send</div>
<div style="left:795.50px;top:90.30px;width:1327.50px;height:71.60px;background:#fcfcfd;border-bottom:1.6px solid #e6e7ee;"></div>
<div style="left:794.80px;top:90.40px;width:1.70px;height:1400.00px;background:#e6e7ee;"></div>
<div class="t" style="left:835.70px;top:115.00px;font-size:20.91px;line-height:23px;height:23px;color:#656a7b;letter-spacing:0.026px;">Sales Data</div>
<div class="t" style="left:981.00px;top:115.00px;font-size:20.91px;line-height:23px;height:23px;color:#656a7b;letter-spacing:0.374px;">Summary</div>
<div style="left:1098.20px;top:107.00px;width:99.10px;height:40.00px;background:#fff;border-radius:9px;box-shadow:0 1px 3px rgba(20,20,50,.10);"></div>
<div class="t" style="left:1115.30px;top:115.00px;font-size:20.91px;line-height:23px;height:23px;color:#0b0b0f;-webkit-text-stroke:0.35px #0b0b0f;letter-spacing:0.584px;">Charts</div>
<svg style="left:1878.10px;top:112.80px;" width="27.40" height="27.40" viewBox="0 0 24 24" fill="none" color="#111" stroke="#111" stroke-width="2" stroke-linecap="round" stroke-linejoin="round"><rect width="18" height="18" x="3" y="3" rx="2"/><path d="M15 3v18"/><path d="m8 9 3 3-3 3"/></svg>
<svg style="left:1943.60px;top:112.80px;" width="27.40" height="27.40" viewBox="0 0 24 24" fill="none" color="#111" stroke="#111" stroke-width="2" stroke-linecap="round" stroke-linejoin="round"><path d="M12 15V3"/><path d="M21 15v4a2 2 0 0 1-2 2H5a2 2 0 0 1-2-2v-4"/><path d="m7 10 5 5 5-5"/></svg>
<div class="t" style="left:1982.00px;top:115.00px;font-size:20.91px;line-height:23px;height:23px;color:#0b0b0f;-webkit-text-stroke:0.35px #0b0b0f;letter-spacing:0.717px;">Download</div>
<div style="left:796.50px;top:162.20px;width:1326.50px;height:1305.50px;overflow:hidden;background:#fff;"><div style="left:21.40px;top:21.80px;width:1277.00px;height:1500.00px;background:#fff;border:2px solid #eff0f5;border-radius:20px;box-shadow:0 1px 3px rgba(20,20,50,.05);"></div>
<svg style="left:51.40px;top:53.80px;" width="27.20" height="27.20" viewBox="0 0 24 24" fill="none" color="#6b7083" stroke="#6b7083" stroke-width="2" stroke-linecap="round" stroke-linejoin="round"><path d="M3 3v16a2 2 0 0 0 2 2h16"/><path d="M18 17V9"/><path d="M13 17V5"/><path d="M8 17v-3"/></svg>
<div class="t" style="left:92.80px;top:53.80px;font-size:24.10px;line-height:27px;height:27px;color:#0b0b0f;font-weight:700;letter-spacing:-0.505px;">Chart board</div>
<div class="t" style="left:51.50px;top:98.80px;font-size:24.10px;line-height:27px;height:27px;color:#656a7b;letter-spacing:0.721px;">Live previews for 5 charts on Charts.</div>
<div style="left:51.40px;top:156.80px;width:598.80px;height:747.00px;background:#fff;border:2px solid #eff0f5;border-radius:25px;box-shadow:0 1px 3px rgba(20,20,50,.05);"></div>
<div style="left:51.40px;top:925.40px;width:598.80px;height:760.00px;background:#fff;border:2px solid #eff0f5;border-radius:25px;box-shadow:0 1px 3px rgba(20,20,50,.05);"></div>
<div style="left:670.50px;top:156.80px;width:598.80px;height:747.00px;background:#fff;border:2px solid #eff0f5;border-radius:25px;box-shadow:0 1px 3px rgba(20,20,50,.05);"></div>
<div style="left:670.50px;top:925.40px;width:598.80px;height:760.00px;background:#fff;border:2px solid #eff0f5;border-radius:25px;box-shadow:0 1px 3px rgba(20,20,50,.05);"></div>
<div class="t" style="left:80.70px;top:190.80px;font-size:24.10px;line-height:27px;height:27px;color:#0b0b0f;-webkit-text-stroke:0.5px #0b0b0f;letter-spacing:0.549px;">Net Revenue by Region</div>
<div style="left:424.20px;top:187.20px;width:68.70px;height:36.70px;background:#fff;border:2px solid #eff0f5;border-radius:11px;box-shadow:0 1px 2px rgba(20,20,50,.05);"></div>
<div class="t" style="left:442.05px;top:193.80px;font-size:20.81px;line-height:23px;height:23px;color:#0b0b0f;-webkit-text-stroke:0.55px #0b0b0f;letter-spacing:0.312px;">Bar</div>
<div style="left:509.50px;top:187.20px;width:112.00px;height:36.70px;background:#fff;border:2px solid #eff0f5;border-radius:11px;box-shadow:0 1px 2px rgba(20,20,50,.05);"></div>
<div class="t" style="left:529.00px;top:193.80px;font-size:20.81px;line-height:23px;height:23px;color:#0b0b0f;-webkit-text-stroke:0.55px #0b0b0f;letter-spacing:0.025px;">1 series</div>
<div class="t" style="left:80.70px;top:229.80px;font-size:21.01px;line-height:23px;height:23px;color:#656a7b;letter-spacing:0.104px;">Source: Sales Data</div>
<div class="t" style="left:80.70px;top:272.80px;font-size:20.09px;line-height:22px;height:22px;color:#656a7b;letter-spacing:0.502px;">Region · Revenue (£)</div>
<div style="left:79.80px;top:324.80px;width:541.80px;height:485.00px;background:#fff;border:2px solid #eff0f5;border-radius:25px;"></div>
<div style="left:200.00px;top:353.60px;width:391.30px;height:1.60px;background:#f1f2f6;"></div>
<div class="t" style="left:114.50px;top:350.80px;font-size:20.81px;line-height:23px;height:23px;color:#656a7b;letter-spacing:0.719px;">160000</div>
<div style="left:200.00px;top:449.20px;width:391.30px;height:1.60px;background:#f1f2f6;"></div>
<div class="t" style="left:114.50px;top:438.80px;font-size:20.81px;line-height:23px;height:23px;color:#656a7b;letter-spacing:0.719px;">120000</div>
<div style="left:200.00px;top:543.80px;width:391.30px;height:1.60px;background:#f1f2f6;"></div>
<div class="t" style="left:124.00px;top:533.80px;font-size:20.81px;line-height:23px;height:23px;color:#656a7b;letter-spacing:1.414px;">80000</div>
<div style="left:200.00px;top:639.40px;width:391.30px;height:1.60px;background:#f1f2f6;"></div>
<div class="t" style="left:124.00px;top:628.80px;font-size:20.81px;line-height:23px;height:23px;color:#656a7b;letter-spacing:1.414px;">40000</div>
<div style="left:200.00px;top:734.40px;width:391.30px;height:1.60px;background:#f1f2f6;"></div>
<div class="t" style="left:175.00px;top:723.80px;font-size:20.81px;line-height:23px;height:23px;color:#656a7b;">0</div>
<div style="left:209.70px;top:396.50px;width:77.80px;height:338.70px;background:#e76f51;border-radius:7px;"></div>
<div style="left:307.70px;top:454.20px;width:77.80px;height:281.00px;background:#e76f51;border-radius:7px;"></div>
<div style="left:405.40px;top:505.10px;width:77.80px;height:230.10px;background:#e76f51;border-radius:7px;"></div>
<div style="left:503.40px;top:479.80px;width:77.80px;height:255.40px;background:#e76f51;border-radius:7px;"></div>
<div class="t" style="left:221.50px;top:743.80px;font-size:20.81px;line-height:23px;height:23px;color:#656a7b;letter-spacing:0.785px;">North</div>
<div class="t" style="left:318.50px;top:743.80px;font-size:20.81px;line-height:23px;height:23px;color:#656a7b;letter-spacing:0.410px;">South</div>
<div class="t" style="left:423.80px;top:743.80px;font-size:20.81px;line-height:23px;height:23px;color:#656a7b;letter-spacing:-0.208px;">East</div>
<div class="t" style="left:518.30px;top:743.80px;font-size:20.81px;line-height:23px;height:23px;color:#656a7b;letter-spacing:0.333px;">West</div>
<div style="left:80.90px;top:832.00px;width:227.60px;height:42.20px;background:#fff;border:2px solid #eff0f5;border-radius:21px;"></div>
<div style="left:102.20px;top:846.60px;width:13.40px;height:13.40px;background:#e76f51;border-radius:50%;"></div>
<div class="t" style="left:130.50px;top:841.80px;font-size:20.81px;line-height:23px;height:23px;color:#656a7b;letter-spacing:0.286px;">Net Revenue (£)</div>
<div class="t" style="left:700.70px;top:190.80px;font-size:24.10px;line-height:27px;height:27px;color:#0b0b0f;-webkit-text-stroke:0.5px #0b0b0f;letter-spacing:0.636px;">Revenue by Salesperson</div>
<div style="left:1043.50px;top:187.20px;width:70.30px;height:36.70px;background:#fff;border:2px solid #eff0f5;border-radius:11px;box-shadow:0 1px 2px rgba(20,20,50,.05);"></div>
<div class="t" style="left:1062.15px;top:193.80px;font-size:20.81px;line-height:23px;height:23px;color:#0b0b0f;-webkit-text-stroke:0.55px #0b0b0f;letter-spacing:0.312px;">Bar</div>
<div style="left:1129.50px;top:187.20px;width:112.00px;height:36.70px;background:#fff;border:2px solid #eff0f5;border-radius:11px;box-shadow:0 1px 2px rgba(20,20,50,.05);"></div>
<div class="t" style="left:1149.00px;top:193.80px;font-size:20.81px;line-height:23px;height:23px;color:#0b0b0f;-webkit-text-stroke:0.55px #0b0b0f;letter-spacing:0.025px;">1 series</div>
<div class="t" style="left:700.70px;top:229.80px;font-size:21.01px;line-height:23px;height:23px;color:#656a7b;letter-spacing:0.104px;">Source: Sales Data</div>
<div class="t" style="left:700.70px;top:272.80px;font-size:20.09px;line-height:22px;height:22px;color:#656a7b;letter-spacing:0.585px;">Salesperson · Revenue (£)</div>
<div style="left:699.50px;top:324.80px;width:541.80px;height:485.00px;background:#fff;border:2px solid #eff0f5;border-radius:25px;"></div>
<div style="left:819.20px;top:354.00px;width:392.00px;height:1.60px;background:#f1f2f6;"></div>
<div class="t" style="left:733.70px;top:350.80px;font-size:20.81px;line-height:23px;height:23px;color:#656a7b;letter-spacing:0.719px;">120000</div>
<div style="left:819.20px;top:449.20px;width:392.00px;height:1.60px;background:#f1f2f6;"></div>
<div class="t" style="left:743.20px;top:438.80px;font-size:20.81px;line-height:23px;height:23px;color:#656a7b;letter-spacing:1.414px;">90000</div>
<div style="left:819.20px;top:544.30px;width:392.00px;height:1.60px;background:#f1f2f6;"></div>
<div class="t" style="left:743.20px;top:533.80px;font-size:20.81px;line-height:23px;height:23px;color:#656a7b;letter-spacing:1.414px;">60000</div>
<div style="left:819.20px;top:639.40px;width:392.00px;height:1.60px;background:#f1f2f6;"></div>
<div class="t" style="left:743.20px;top:628.80px;font-size:20.81px;line-height:23px;height:23px;color:#656a7b;letter-spacing:1.414px;">30000</div>
<div style="left:819.20px;top:734.50px;width:392.00px;height:1.60px;background:#f1f2f6;"></div>
<div class="t" style="left:794.20px;top:723.80px;font-size:20.81px;line-height:23px;height:23px;color:#656a7b;">0</div>
<div style="left:827.50px;top:359.90px;width:61.00px;height:375.30px;background:#e76f51;border-radius:7px;"></div>
<div style="left:905.50px;top:400.60px;width:61.50px;height:334.60px;background:#e76f51;border-radius:7px;"></div>
<div style="left:984.10px;top:424.10px;width:61.40px;height:311.10px;background:#e76f51;border-radius:7px;"></div>
<div style="left:1062.10px;top:458.30px;width:61.40px;height:276.90px;background:#e76f51;border-radius:7px;"></div>
<div style="left:1140.50px;top:560.80px;width:61.50px;height:174.40px;background:#e76f51;border-radius:7px;"></div>
<div class="t" style="left:882.00px;top:743.80px;font-size:20.81px;line-height:23px;height:23px;color:#656a7b;letter-spacing:0.295px;">Emily Chen</div>
<div class="t" style="left:1089.30px;top:743.80px;font-size:20.81px;line-height:23px;height:23px;color:#656a7b;letter-spacing:0.325px;">Michael Ross</div>
<div style="left:700.50px;top:832.00px;width:227.60px;height:42.20px;background:#fff;border:2px solid #eff0f5;border-radius:21px;"></div>
<div style="left:721.80px;top:846.60px;width:13.40px;height:13.40px;background:#e76f51;border-radius:50%;"></div>
<div class="t" style="left:750.10px;top:841.80px;font-size:20.81px;line-height:23px;height:23px;color:#656a7b;letter-spacing:0.286px;">Net Revenue (£)</div>
<div class="t" style="left:80.70px;top:959.80px;font-size:24.10px;line-height:27px;height:27px;color:#0b0b0f;-webkit-text-stroke:0.5px #0b0b0f;letter-spacing:0.803px;">Revenue by Category</div>
<div style="left:427.10px;top:955.90px;width:66.00px;height:36.70px;background:#fff;border:2px solid #eff0f5;border-radius:11px;box-shadow:0 1px 2px rgba(20,20,50,.05);"></div>
<div class="t" style="left:445.10px;top:962.80px;font-size:20.81px;line-height:23px;height:23px;color:#0b0b0f;-webkit-text-stroke:0.55px #0b0b0f;letter-spacing:-0.031px;">Pie</div>
<div style="left:509.50px;top:955.90px;width:112.00px;height:36.70px;background:#fff;border:2px solid #eff0f5;border-radius:11px;box-shadow:0 1px 2px rgba(20,20,50,.05);"></div>
<div class="t" style="left:529.00px;top:962.80px;font-size:20.81px;line-height:23px;height:23px;color:#0b0b0f;-webkit-text-stroke:0.55px #0b0b0f;letter-spacing:0.025px;">1 series</div>
<div class="t" style="left:80.70px;top:998.80px;font-size:21.01px;line-height:23px;height:23px;color:#656a7b;letter-spacing:0.104px;">Source: Sales Data</div>
<div style="left:79.50px;top:1050.60px;width:541.80px;height:520.00px;background:#fff;border:2px solid #eff0f5;border-radius:25px;"></div>
<svg style="left:219.10px;top:1162.10px" width="263.6" height="263.6" viewBox="-131.8 -131.8 263.6 263.6"><circle r="131.8" fill="#e76f51"/><path d="M0 0H131.8A131.8 131.8 0 0 1 -103.900 81.100Z" fill="#2a9d8f"/></svg>
<div class="t" style="left:700.70px;top:959.80px;font-size:24.10px;line-height:27px;height:27px;color:#0b0b0f;-webkit-text-stroke:0.5px #0b0b0f;letter-spacing:0.834px;">Monthly Revenue Trend</div>
<div style="left:1035.50px;top:955.90px;width:78.80px;height:36.70px;background:#fff;border:2px solid #eff0f5;border-radius:11px;box-shadow:0 1px 2px rgba(20,20,50,.05);"></div>
<div class="t" style="left:1054.90px;top:962.80px;font-size:20.81px;line-height:23px;height:23px;color:#0b0b0f;-webkit-text-stroke:0.55px #0b0b0f;letter-spacing:0.224px;">Line</div>
<div style="left:1129.50px;top:955.90px;width:112.00px;height:36.70px;background:#fff;border:2px solid #eff0f5;border-radius:11px;box-shadow:0 1px 2px rgba(20,20,50,.05);"></div>
<div class="t" style="left:1149.00px;top:962.80px;font-size:20.81px;line-height:23px;height:23px;color:#0b0b0f;-webkit-text-stroke:0.55px #0b0b0f;letter-spacing:0.025px;">1 series</div>
<div class="t" style="left:700.70px;top:998.80px;font-size:21.01px;line-height:23px;height:23px;color:#656a7b;letter-spacing:0.104px;">Source: Sales Data</div>
<div class="t" style="left:700.70px;top:1041.80px;font-size:20.09px;line-height:22px;height:22px;color:#656a7b;letter-spacing:0.659px;">Month · Revenue (£)</div>
<div style="left:699.50px;top:1092.60px;width:541.80px;height:484.00px;background:#fff;border:2px solid #eff0f5;border-radius:25px;"></div>
<div style="left:819.50px;top:1122.00px;width:391.60px;height:1.60px;background:#f1f2f6;"></div>
<div class="t" style="left:743.50px;top:1118.80px;font-size:20.81px;line-height:23px;height:23px;color:#656a7b;letter-spacing:1.414px;">60000</div>
<div style="left:819.50px;top:1217.40px;width:391.60px;height:1.60px;background:#f1f2f6;"></div>
<div class="t" style="left:743.50px;top:1206.80px;font-size:20.81px;line-height:23px;height:23px;color:#656a7b;letter-spacing:1.414px;">45000</div>
<div style="left:819.50px;top:1312.80px;width:391.60px;height:1.60px;background:#f1f2f6;"></div>
<div class="t" style="left:743.50px;top:1302.80px;font-size:20.81px;line-height:23px;height:23px;color:#656a7b;letter-spacing:1.414px;">30000</div>
<svg style="left:0;top:0" width="1326.5" height="1320" viewBox="0 0 1326.5 1320"><path d="M818.8 1304.9C830.8 1297.5 842.8 1290.0 854.8 1282.8C866.7 1275.7 878.6 1270.0 890.5 1261.9C902.4 1253.8 914.3 1232.8 926.2 1232.8C938.0 1232.8 949.7 1253.1 961.5 1253.1C973.4 1253.1 985.3 1247.0 997.2 1242.3C1009.1 1237.6 1020.9 1222.4 1032.8 1222.4C1044.7 1222.4 1056.6 1258.4 1068.5 1258.4C1080.4 1258.4 1092.2 1210.8 1104.1 1210.8C1116.0 1210.8 1127.9 1219.7 1139.8 1225.8C1151.7 1231.9 1163.6 1248.9 1175.5 1248.9C1187.4 1248.9 1199.2 1217.9 1211.1 1202.4" fill="none" stroke="#e76f51" stroke-width="3"/><circle cx="818.8" cy="1304.9" r="4.6" fill="#fff" stroke="#e76f51" stroke-width="2.4"/><circle cx="854.8" cy="1282.8" r="4.6" fill="#fff" stroke="#e76f51" stroke-width="2.4"/><circle cx="890.5" cy="1261.9" r="4.6" fill="#fff" stroke="#e76f51" stroke-width="2.4"/><circle cx="926.2" cy="1232.8" r="4.6" fill="#fff" stroke="#e76f51" stroke-width="2.4"/><circle cx="961.5" cy="1253.1" r="4.6" fill="#fff" stroke="#e76f51" stroke-width="2.4"/><circle cx="997.2" cy="1242.3" r="4.6" fill="#fff" stroke="#e76f51" stroke-width="2.4"/><circle cx="1032.8" cy="1222.4" r="4.6" fill="#fff" stroke="#e76f51" stroke-width="2.4"/><circle cx="1068.5" cy="1258.4" r="4.6" fill="#fff" stroke="#e76f51" stroke-width="2.4"/><circle cx="1104.1" cy="1210.8" r="4.6" fill="#fff" stroke="#e76f51" stroke-width="2.4"/><circle cx="1139.8" cy="1225.8" r="4.6" fill="#fff" stroke="#e76f51" stroke-width="2.4"/><circle cx="1175.5" cy="1248.9" r="4.6" fill="#fff" stroke="#e76f51" stroke-width="2.4"/><circle cx="1211.1" cy="1202.4" r="4.6" fill="#fff" stroke="#e76f51" stroke-width="2.4"/></svg></div>
<div style="left:786.00px;top:776.00px;width:21.00px;height:28.00px;background:#e6e8ed;border-radius:7px;"></div>
<svg style="left:787.45px;top:781.65px;" width="17.50" height="17.50" viewBox="0 0 24 24" fill="none" color="#111" stroke="#111" stroke-width="2.4" stroke-linecap="round" stroke-linejoin="round"><circle cx="9" cy="12" r="1"/><circle cx="9" cy="5" r="1"/><circle cx="9" cy="19" r="1"/><circle cx="15" cy="12" r="1"/><circle cx="15" cy="5" r="1"/><circle cx="15" cy="19" r="1"/></svg>
<svg style="left:46.40px;top:30.50px;" width="22.60" height="22.60" viewBox="0 0 24 24" fill="none" color="#111" stroke="#111" stroke-width="2.1" stroke-linecap="round" stroke-linejoin="round"><rect width="18" height="18" x="3" y="3" rx="2"/><path d="M9 3v18"/></svg>
<div style="left:109.60px;top:27.40px;width:1.50px;height:26.60px;background:#e2e4ea;"></div>
<div class="t" style="left:140.20px;top:28.00px;font-size:24.10px;line-height:27px;height:27px;color:#656a7b;letter-spacing:0.613px;">Tools</div>
<svg style="left:218.90px;top:30.60px;" width="21.60" height="21.60" viewBox="0 0 24 24" fill="none" color="#656a7b" stroke="#656a7b" stroke-width="2" stroke-linecap="round" stroke-linejoin="round"><path d="m9 18 6-6-6-6"/></svg>
<div class="t" style="left:259.60px;top:28.00px;font-size:24.10px;line-height:27px;height:27px;color:#656a7b;letter-spacing:0.587px;">Spreadsheet AI</div>
<svg style="left:451.30px;top:30.60px;" width="21.60" height="21.60" viewBox="0 0 24 24" fill="none" color="#656a7b" stroke="#656a7b" stroke-width="2" stroke-linecap="round" stroke-linejoin="round"><path d="m9 18 6-6-6-6"/></svg>
<div class="t" style="left:493.00px;top:28.00px;font-size:24.10px;line-height:27px;height:27px;color:#111;letter-spacing:0.625px;">Generating Insightful Data Visualisations</div>
<div style="left:1943.00px;top:11.40px;width:61.40px;height:60.00px;background:#fff;border:2px solid #eff0f5;border-radius:12px;box-shadow:0 1px 3px rgba(20,20,50,.08);"></div>
<svg style="left:1960.00px;top:27.90px;" width="27.40" height="27.40" viewBox="0 0 24 24" fill="none" color="#111" stroke="#111" stroke-width="2" stroke-linecap="round" stroke-linejoin="round"><path d="M21 10V8a2 2 0 0 0-1-1.73l-7-4a2 2 0 0 0-2 0l-7 4A2 2 0 0 0 3 8v8a2 2 0 0 0 1 1.73l7 4a2 2 0 0 0 2 0l2-1.14"/><path d="m7.5 4.27 9 5.15"/><polyline points="3.29 7 12 12 20.71 7"/><line x1="12" x2="12" y1="22" y2="12"/><circle cx="18.5" cy="15.5" r="2.5"/><path d="M20.27 17.27 22 19"/></svg>
<div style="left:2019.00px;top:11.40px;width:61.40px;height:60.00px;background:#fff;border:2px solid #eff0f5;border-radius:12px;box-shadow:0 1px 3px rgba(20,20,50,.08);"></div>
<svg style="left:2036.00px;top:27.90px;" width="27.40" height="27.40" viewBox="0 0 24 24" fill="none" color="#111" stroke="#111" stroke-width="2" stroke-linecap="round" stroke-linejoin="round"><path d="M10.268 21a2 2 0 0 0 3.464 0"/><path d="M3.262 15.326A1 1 0 0 0 4 17h16a1 1 0 0 0 .74-1.673C19.41 13.956 18 12.499 18 8A6 6 0 0 0 6 8c0 4.499-1.411 5.956-2.738 7.326"/></svg>
<div style="left:2049.30px;top:15.70px;width:26.60px;height:26.60px;background:#ef4444;border-radius:50%;"></div>
<div class="t" style="left:2058.10px;top:22.00px;font-size:15.96px;line-height:17px;height:17px;color:#fff;">3</div>
<div style="left:0.00px;top:83.40px;width:2123.00px;height:7.00px;background:linear-gradient(90deg,#3b82f6 0%,#06b6d4 50%,#6366f1 100%);"></div></div>
</body></html>
